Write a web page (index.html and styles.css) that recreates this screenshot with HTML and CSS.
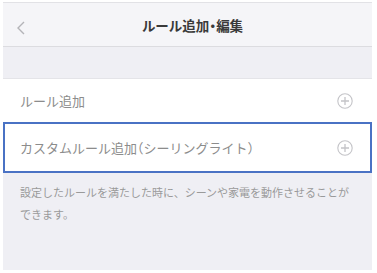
FILE: index.html
```html
<!DOCTYPE html>
<html lang="ja">
<head>
    <meta charset="UTF-8">
    <meta name="viewport" content="width=device-width, initial-scale=1.0">
    <title>ルール追加・編集</title>
    <link rel="stylesheet" href="styles.css">
</head>
<body>
    <div class="screen">
        <div class="header">
            <span class="back">
                <svg width="8" height="14" viewBox="0 0 8 14"><path d="M7 1 L1 7 L7 13" fill="none" stroke="#b4b4b8" stroke-width="1.4"/></svg>
            </span>
            <h1>ルール追加<span class="half">・</span>編集</h1>
        </div>

        <div class="spacer"></div>

        <div class="row">
            <span>ルール追加</span>
            <svg class="plus" width="16" height="16" viewBox="0 0 16 16"><circle cx="8" cy="8" r="7.2" fill="none" stroke="#c4c4c8" stroke-width="1.1"/><path d="M8 4 V12 M4 8 H12" stroke="#c4c4c8" stroke-width="1.3"/></svg>
        </div>
        <div class="row selected">
            <span>カスタムルール追加<span class="half">（</span>シーリングライト<span class="half">）</span></span>
            <svg class="plus" width="16" height="16" viewBox="0 0 16 16"><circle cx="8" cy="8" r="7.2" fill="none" stroke="#c4c4c8" stroke-width="1.1"/><path d="M8 4 V12 M4 8 H12" stroke="#c4c4c8" stroke-width="1.3"/></svg>
        </div>

        <p class="note">設定したルールを満たした時に、シーンや家電を動作させることができます。</p>
    </div>
</body>
</html>
```

FILE: styles.css
```css
body {
    margin: 0;
    background: #fff;
    font-family: "Noto Sans CJK JP", "Noto Sans", sans-serif;
}
.screen {
    margin: 2px 5px 0 3px;
    height: 268px;
    background: #efeff4;
    display: flex;
    flex-direction: column;
}
.header {
    height: 43px;
    background: #f5f5f8;
    border-top: 1px solid #e2e2e6;
    border-bottom: 1px solid #dcdce0;
    display: flex;
    align-items: center;
    justify-content: center;
    position: relative;
}
.header h1 {
    margin: 0 0 0 10px;
    font-size: 13.5px;
    font-weight: bold;
    color: #3a3a3a;
}
.half {
    font-feature-settings: "halt";
}
.back {
    position: absolute;
    left: 14px;
    top: 13px;
}
.spacer {
    height: 31px;
    border-bottom: 1px solid #e4e4e8;
}
.row {
    height: 43px;
    background: #fff;
    display: flex;
    align-items: center;
    justify-content: space-between;
    padding: 0 19px 0 17px;
    font-size: 13px;
    color: #8c8c8c;
}
.row.selected {
    height: 47px;
    border: 2px solid #4a72c4;
    padding: 0 17px 0 15px;
}
.plus {
    display: block;
}
.note {
    margin: 0;
    padding: 8px 17px;
    font-size: 11px;
    line-height: 22px;
    color: #9a9a9a;
}
```
